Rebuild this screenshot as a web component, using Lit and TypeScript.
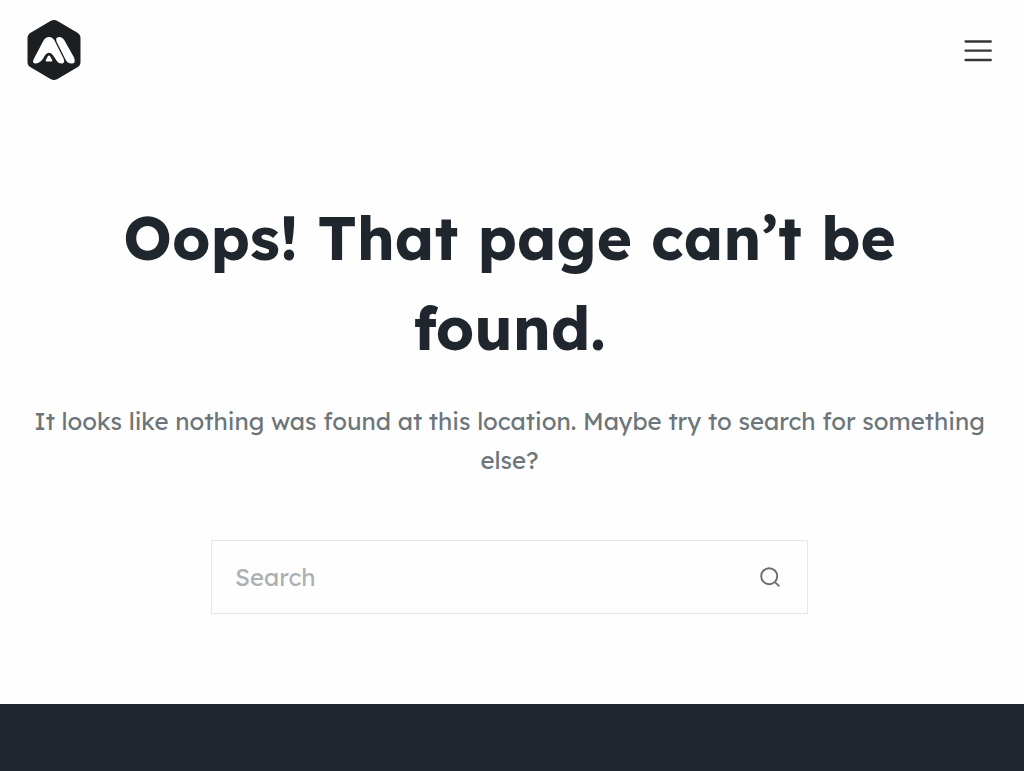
import { LitElement, html, css } from "lit";
import { customElement } from "lit/decorators.js";

@customElement("app-root")
export class AppRoot extends LitElement {
  static styles = css`
    :host {
      display: flex;
      flex-direction: column;
      min-height: 100vh;
      background: #fefefe;
      color: #1f262d;
      font-family: Lexend, Inter, sans-serif;
    }
    .header {
      display: flex;
      align-items: center;
      justify-content: space-between;
      padding: 20px 32px 20px 27px;
    }
    .logo {
      display: block;
    }
    .logo svg,
    .toggle svg,
    .submit svg {
      display: block;
    }
    .toggle,
    .submit {
      padding: 0;
      border: 0;
      background: none;
      cursor: pointer;
    }
    .toggle {
      color: #343739;
    }
    .main {
      flex: 1 0 auto;
      padding: 93px 32px 90px 27px;
      text-align: center;
    }
    .title {
      margin: 0 0 29px;
      font-size: 60px;
      line-height: 90px;
      font-weight: 700;
    }
    .message {
      margin: 0 0 60px;
      color: #6c757a;
      font-size: 24px;
      line-height: 39px;
    }
    .search {
      display: flex;
      align-items: center;
      box-sizing: border-box;
      max-width: 597px;
      height: 74px;
      margin: 0 auto;
      padding: 0 27px 0 23px;
      border: 1px solid #e6e7e8;
    }
    .search:focus-within {
      border-color: #8b9297;
    }
    .field {
      flex: 1;
      min-width: 0;
      height: 100%;
      padding: 0;
      border: 0;
      outline: 0;
      background: none;
      color: #6c757a;
      font: inherit;
      font-size: 24px;
    }
    .field::placeholder {
      color: #adb0b1;
      opacity: 1;
    }
    .submit {
      color: #6b6d6f;
    }
    .footer {
      flex: none;
      height: 67px;
      background: #1f262d;
    }
  `;

  render() {
    return html`
      <header class="header">
        <a class="logo" href="/" aria-label="Home">
          <svg width="54" height="60" viewBox="0 0 54 60">
            <path
              fill="#1c1f21"
              d="M23.5 1Q27 -1 30.500 1L50 12.500Q53.500 14.500 53.500 18V42Q53.500 45.500 50 47.500L30.500 59Q27 61 23.500 59L4 47.500Q.5 45.500 .5 42V18Q.5 14.500 4 12.500Z"
            />
            <path
              fill="#fff"
              d="M6.500 39.500L16.500 20.500Q18.500 17 22 17Q25.500 17 27.500 20.500L36.500 38.500Q38.500 43.500 34.500 43.500Q31.500 43.500 29.800 41L25.800 35Q22 30.500 18.200 35Q14 43.500 8.500 43.500Q5 43.500 6.500 39.500Z"
            />
            <path
              fill="#fff"
              d="M30 17.500Q34.500 15.500 37.500 20.500L47 37.500Q49.500 43.500 44.500 43.500Q40.500 43.500 38.500 39.500L29.500 21.500Q28.500 18.500 30 17.500Z"
            />
            <path fill="#fff" d="M21 36Q22 34.800 23 36L25.200 40Q25.800 41.500 24.500 41.500H19.500Q18.200 41.500 18.800 40Z" />
          </svg>
        </a>
        <button class="toggle" type="button" aria-label="Menu">
          <svg width="28" height="24" viewBox="0 0 28 24" fill="none" stroke="currentColor" stroke-width="2.300">
            <path d="M1.500 3.500H26.800M1.500 12.700H26.800M1.500 22H26.800" stroke-linecap="round" />
          </svg>
        </button>
      </header>
      <main class="main">
        <h1 class="title">Oops! That page can’t be found.</h1>
        <p class="message">
          It looks like nothing was found at this location. Maybe try to search for something else?
        </p>
        <form class="search" role="search">
          <input class="field" type="text" name="s" placeholder="Search" aria-label="Search" />
          <button class="submit" type="submit" aria-label="Search">
            <svg width="20" height="20" viewBox="0 0 20 20" fill="none" stroke="currentColor" stroke-width="1.900">
              <circle cx="9.200" cy="9.200" r="8" />
              <path d="M14.800 14.800L19.300 19.300" />
            </svg>
          </button>
        </form>
      </main>
      <footer class="footer"></footer>
    `;
  }
}
